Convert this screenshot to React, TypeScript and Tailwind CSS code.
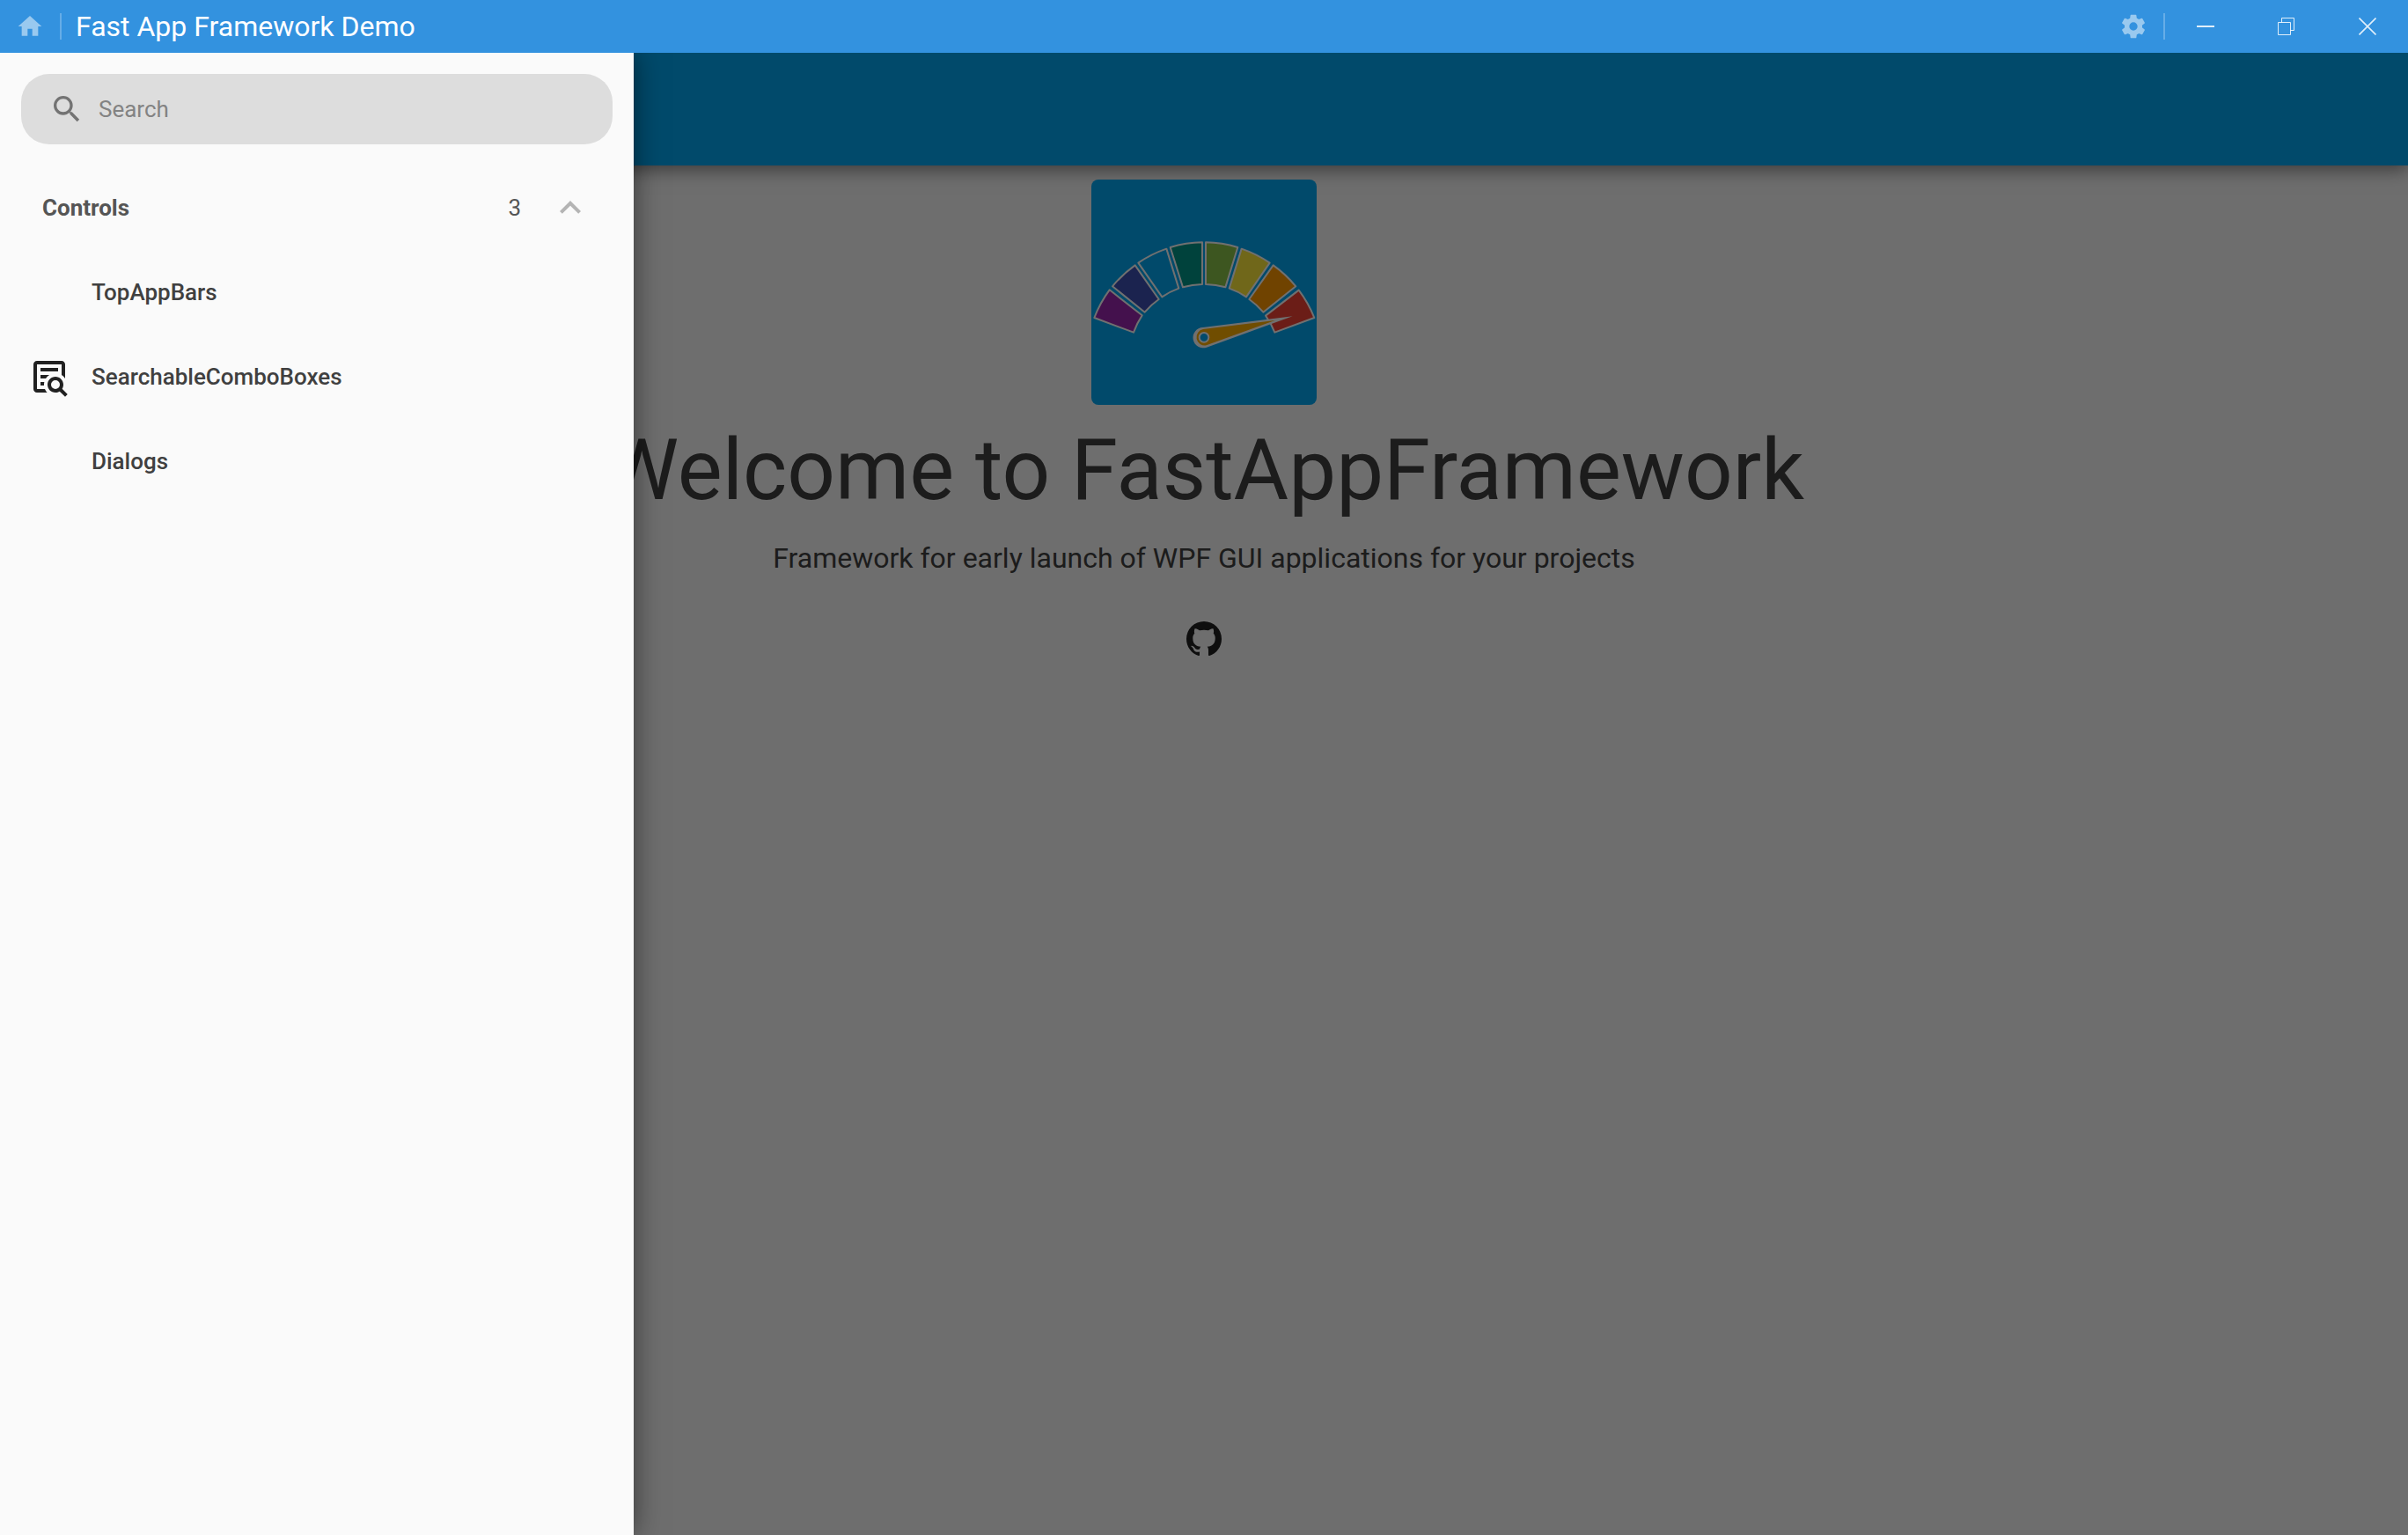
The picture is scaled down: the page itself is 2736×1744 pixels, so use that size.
import type { ReactNode } from "react";

const icons = {
  home: "M10,20V14H14V20H19V12H22L12,3L2,12H5V20H10Z",
  cog: "M12,15.5A3.5,3.5 0 0,1 8.5,12A3.5,3.5 0 0,1 12,8.5A3.5,3.5 0 0,1 15.5,12A3.5,3.5 0 0,1 12,15.5M19.43,12.97C19.47,12.65 19.5,12.33 19.5,12C19.5,11.67 19.47,11.34 19.43,11L21.54,9.37C21.73,9.22 21.78,8.95 21.66,8.73L19.66,5.27C19.54,5.05 19.27,4.96 19.05,5.05L16.56,6.05C16.04,5.66 15.5,5.32 14.87,5.07L14.5,2.42C14.46,2.18 14.25,2 14,2H10C9.75,2 9.54,2.18 9.5,2.42L9.13,5.07C8.5,5.32 7.96,5.66 7.44,6.05L4.95,5.05C4.73,4.96 4.46,5.05 4.34,5.27L2.34,8.73C2.21,8.95 2.27,9.22 2.46,9.37L4.57,11C4.53,11.34 4.5,11.67 4.5,12C4.5,12.33 4.53,12.65 4.57,12.97L2.46,14.63C2.27,14.78 2.21,15.05 2.34,15.27L4.34,18.73C4.46,18.95 4.73,19.03 4.95,18.95L7.44,17.94C7.96,18.34 8.5,18.68 9.13,18.93L9.5,21.58C9.54,21.82 9.75,22 10,22H14C14.25,22 14.46,21.82 14.5,21.58L14.87,18.93C15.5,18.67 16.04,18.34 16.56,17.94L19.05,18.95C19.27,19.03 19.54,18.95 19.66,18.73L21.66,15.27C21.78,15.05 21.73,14.78 21.54,14.63L19.43,12.97Z",
  magnify:
    "M9.5,3A6.5,6.5 0 0,1 16,9.5C16,11.11 15.41,12.59 14.44,13.73L14.71,14H15.5L20.5,19L19,20.5L14,15.5V14.71L13.73,14.44C12.59,15.41 11.11,16 9.5,16A6.5,6.5 0 0,1 3,9.5A6.5,6.5 0 0,1 9.5,3M9.5,5C7,5 5,7 5,9.5C5,12 7,14 9.5,14C12,14 14,12 14,9.5C14,7 12,5 9.5,5Z",
  chevronUp: "M7.41,15.41L12,10.83L16.59,15.41L18,14L12,8L6,14L7.41,15.41Z",
  textBoxSearch:
    "M15.5,12C18,12 20,14 20,16.5C20,17.38 19.75,18.21 19.31,18.9L22.39,22L21,23.39L17.88,20.32C17.19,20.75 16.37,21 15.5,21C13,21 11,19 11,16.5C11,14 13,12 15.5,12M15.5,14A2.5,2.5 0 0,0 13,16.5A2.5,2.5 0 0,0 15.5,19A2.5,2.5 0 0,0 18,16.5A2.5,2.5 0 0,0 15.5,14M5,3H19C20.11,3 21,3.89 21,5V13.03C20.5,12.23 19.81,11.54 19,11V5H5V19H9.5C9.81,19.75 10.26,20.42 10.81,21H5C3.89,21 3,20.11 3,19V5C3,3.89 3.89,3 5,3M7,7H17V9H7V7M7,11H12.03C11.23,11.5 10.54,12.19 10,13H7V11M7,15H9.17C9.06,15.5 9,16 9,16.5V17H7V15Z",
  github:
    "M12,2A10,10 0 0,0 2,12C2,16.42 4.87,20.17 8.84,21.5C9.34,21.58 9.5,21.27 9.5,21C9.5,20.77 9.5,20.14 9.5,19.31C6.73,19.91 6.14,17.97 6.14,17.97C5.68,16.81 5.03,16.5 5.03,16.5C4.12,15.88 5.1,15.9 5.1,15.9C6.1,15.97 6.63,16.93 6.63,16.93C7.5,18.45 8.97,18 9.54,17.76C9.63,17.11 9.89,16.67 10.17,16.42C7.95,16.17 5.62,15.31 5.62,11.5C5.62,10.39 6,9.5 6.65,8.79C6.55,8.54 6.2,7.5 6.75,6.15C6.75,6.15 7.59,5.88 9.5,7.17C10.29,6.95 11.15,6.84 12,6.84C12.85,6.84 13.71,6.95 14.5,7.17C16.41,5.88 17.25,6.15 17.25,6.15C17.8,7.5 17.45,8.54 17.35,8.79C18,9.5 18.38,10.39 18.38,11.5C18.38,15.32 16.04,16.16 13.81,16.41C14.17,16.72 14.5,17.33 14.5,18.26C14.5,19.6 14.5,20.68 14.5,21C14.5,21.27 14.66,21.59 15.17,21.5C19.14,20.16 22,16.42 22,12A10,10 0 0,0 12,2Z",
};

function Icon({ name, className }: { name: keyof typeof icons; className: string }) {
  return (
    <svg viewBox="0 0 24 24" fill="currentColor" aria-hidden="true" className={className}>
      <path d={icons[name]} />
    </svg>
  );
}

function WindowButton({ label, children }: { label: string; children: ReactNode }) {
  return (
    <button type="button" aria-label={label} className="flex h-full w-[92px] items-center justify-center text-white/85">
      <svg viewBox="0 0 20 20" fill="none" stroke="currentColor" aria-hidden="true" className="size-5">
        {children}
      </svg>
    </button>
  );
}

function TitleBar() {
  return (
    <header className="relative z-20 flex h-[60px] shrink-0 items-center bg-[#3392df]">
      <button type="button" aria-label="Home" className="ml-[18px] text-white/50">
        <Icon name="home" className="size-8" />
      </button>
      <div className="ml-[18px] h-[30px] w-0.5 bg-white/25" />
      <div className="ml-4 text-[32px] leading-9 text-white">Fast App Framework Demo</div>
      <button type="button" aria-label="Settings" className="ml-auto text-white/50">
        <Icon name="cog" className="size-8" />
      </button>
      <div className="ml-[18px] h-[30px] w-0.5 bg-white/25" />
      <WindowButton label="Minimize">
        <path d="M0 10H20" strokeWidth="2" />
      </WindowButton>
      <WindowButton label="Restore">
        <path d="M0.5 5.5H14.5V19.5H0.5ZM4.5 5.5V0.5H18.5V14.5H14.5" />
      </WindowButton>
      <WindowButton label="Close">
        <path d="M0.5 0.5L19.5 19.5M19.5 0.5L0.5 19.5" strokeWidth="1.6" />
      </WindowButton>
    </header>
  );
}

const segments = [
  { fill: "#9c27b0", d: "M92 403A400 400 0 0 0 40 498L174 548A256 256 0 0 1 203 490Z" },
  { fill: "#3f51b5", d: "M179 319A400 400 0 0 0 102 391L212 479A256 256 0 0 1 260 435Z" },
  { fill: "#03a9f4", d: "M286 263A400 400 0 0 0 190 311L271 427A256 256 0 0 1 328 398Z" },
  { fill: "#009688", d: "M408 241A400 400 0 0 0 299 258L342 394A256 256 0 0 1 408 384Z" },
  { fill: "#8bc34a", d: "M420 241A400 400 0 0 1 529 258L487 394A256 256 0 0 0 420 384Z" },
  { fill: "#ffeb3b", d: "M542 263A400 400 0 0 1 638 311L558 427A256 256 0 0 0 500 398Z" },
  { fill: "#ff9800", d: "M650 319A400 400 0 0 1 727 391L616 479A256 256 0 0 0 568 435Z" },
  { fill: "#f44336", d: "M737 404A400 400 0 0 1 790 498L655 548A256 256 0 0 0 624 491Z" },
];

function Logo() {
  return (
    <svg viewBox="30 27 768 768" role="img" aria-label="FastAppFramework logo" className="size-64 rounded-lg bg-[#03a9f4]">
      <g stroke="#fff" strokeWidth="6" strokeLinejoin="round">
        {segments.map((segment) => (
          <path key={segment.fill} d={segment.d} fill={segment.fill} />
        ))}
      </g>
      <path d="M410 531L716 493L423 599A35 35 0 1 1 410 531Z" fill="#fff" />
      <path d="M411 537L656 507L422 592A28 28 0 1 1 411 537Z" fill="#ffaf00" />
      <circle cx="414" cy="565" r="16" fill="#03a9f4" stroke="#fff" strokeWidth="6" />
    </svg>
  );
}

function HomePage() {
  return (
    <main className="flex grow flex-col bg-[#fafafa]">
      <div className="h-32 w-full bg-[#03a9f4] shadow-[0_4px_20px_rgba(0,0,0,0.5)]" />
      <div className="flex flex-col items-center pt-4 text-[#404040]">
        <Logo />
        <h1 className="mt-[18px] text-[96px] leading-[112px] whitespace-nowrap">Welcome to FastAppFramework</h1>
        <p className="mt-[26px] text-[32px] leading-9">
          Framework for early launch of WPF GUI applications for your projects
        </p>
        <a href="#github" aria-label="GitHub" className="mt-[50px] text-[#212121]">
          <Icon name="github" className="size-12" />
        </a>
      </div>
    </main>
  );
}

const items: { label: string; icon?: keyof typeof icons }[] = [
  { label: "TopAppBars" },
  { label: "SearchableComboBoxes", icon: "textBoxSearch" },
  { label: "Dialogs" },
];

function Drawer() {
  return (
    <aside className="absolute inset-y-0 left-0 z-10 w-[720px] bg-[#fafafa] shadow-[0_0_30px_rgba(0,0,0,0.5)]">
      <label className="mx-6 mt-6 flex h-20 items-center gap-4 rounded-[32px] bg-[#ddd] px-8">
        <Icon name="magnify" className="size-10 text-[#737373]" />
        <input
          type="search"
          aria-label="Search"
          placeholder="Search"
          className="grow bg-transparent text-[26px] leading-8 outline-none placeholder:text-[#838383]"
        />
      </label>
      <button type="button" aria-expanded="true" className="mt-6 flex h-24 w-full items-center pr-12 pl-12 text-[26px] leading-8 text-[#555]">
        <span className="font-bold">Controls</span>
        <span className="ml-auto">3</span>
        <Icon name="chevronUp" className="ml-8 size-12 text-[#b4b4b4]" />
      </button>
      <nav>
        {items.map((item) => (
          <a
            key={item.label}
            href={`#${item.label}`}
            className="flex h-24 items-center gap-6 pl-8 text-[26px] leading-8 font-medium text-[#404040]"
          >
            <span className="size-12 text-[#212121]">{item.icon && <Icon name={item.icon} className="size-12" />}</span>
            {item.label}
          </a>
        ))}
      </nav>
    </aside>
  );
}

export default function App() {
  return (
    <div className="flex min-h-screen flex-col overflow-hidden font-[Roboto,sans-serif]">
      <TitleBar />
      <div className="relative flex grow flex-col">
        <HomePage />
        <div className="absolute inset-0 bg-black/56" />
        <Drawer />
      </div>
    </div>
  );
}
